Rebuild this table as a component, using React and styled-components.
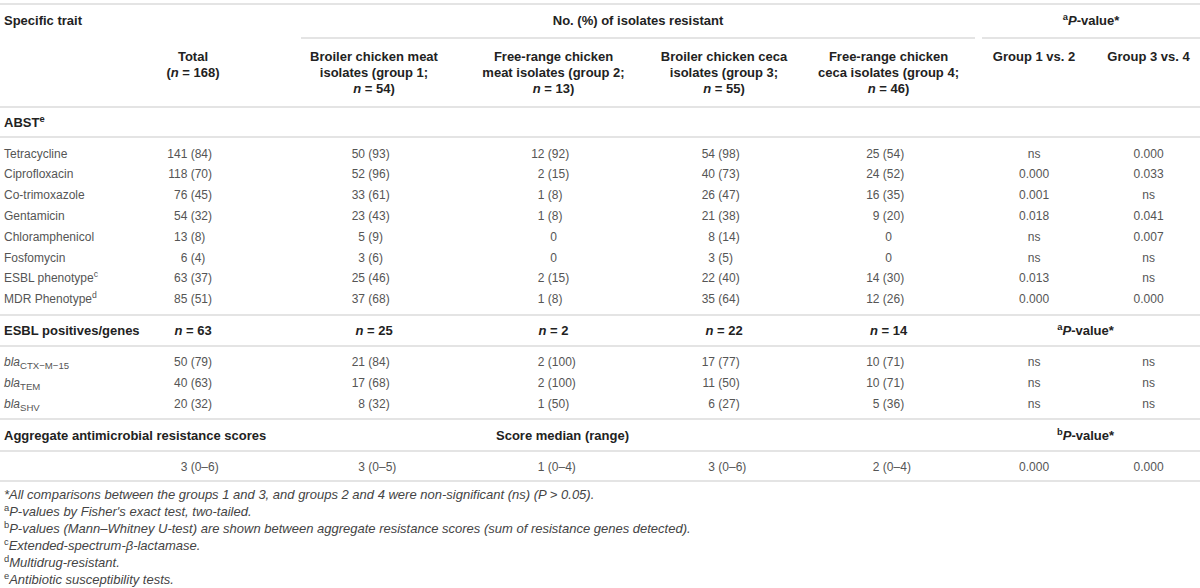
import React from 'react';
import styled, { createGlobalStyle } from 'styled-components';

const GlobalStyle = createGlobalStyle`
  html, body {
    margin: 0;
    padding: 0;
    background: #ffffff;
  }
  body {
    font-family: "Liberation Sans", Arial, sans-serif;
    color: #555555;
  }
`;

const LINE = '2px solid #e4e4e4';

const Page = styled.div`
  width: 1200px;
  padding-top: 3px;
`;

const Table = styled.table`
  width: 1200px;
  table-layout: fixed;
  border-collapse: separate;
  border-spacing: 0;
  border-top: ${LINE};
  font-size: 12px;
`;

const Row = styled.tr`
  & > td,
  & > th {
    padding: ${(p) => p.$pt || 0}px 4px ${(p) => p.$pb || 0}px;
    line-height: ${(p) => p.$lh || 16}px;
    border-bottom: ${(p) => (p.$line ? LINE : 'none')};
  }
`;

const Head = styled.th`
  font-size: 13px;
  font-weight: 700;
  color: #222222;
  text-align: ${(p) => p.$align || 'center'};
  vertical-align: top;
  white-space: nowrap;
`;

const Spanner = styled.div`
  margin: 0 ${(p) => p.$mr || 0}px 0 ${(p) => p.$ml || 0}px;
  padding-bottom: 8px;
  border-bottom: 2px solid ${(p) => (p.$line ? '#e4e4e4' : 'transparent')};
`;

const Label = styled.td`
  text-align: left;
  white-space: nowrap;
  font-size: ${(p) => (p.$bold ? '13px' : '12px')};
  font-weight: ${(p) => (p.$bold ? 700 : 400)};
  color: ${(p) => (p.$bold ? '#222222' : '#555555')};
`;

const Cell = styled.td`
  text-align: center;
  white-space: nowrap;
  font-size: ${(p) => (p.$bold ? '13px' : '12px')};
  font-weight: ${(p) => (p.$bold ? 700 : 400)};
  color: ${(p) => (p.$bold ? '#222222' : '#555555')};
`;

const Num = styled.span`
  display: inline-block;
  width: ${(p) => p.$digits * 0.556}em;
  margin-right: 0.278em;
  text-align: right;
`;

const Pct = styled.span`
  display: inline-block;
  width: 2.334em;
  text-align: left;
`;

const Indent = styled.span`
  display: inline-block;
  padding-left: ${(p) => p.$by}px;
`;

const Sup = styled.sup`
  font-size: 0.72em;
  line-height: 0;
  vertical-align: super;
  font-weight: ${(p) => (p.$bold ? 700 : 400)};
  font-style: normal;
`;

const Sub = styled.sub`
  font-size: 0.8em;
  line-height: 0;
  vertical-align: sub;
  font-style: normal;
`;

const Notes = styled.div`
  padding: 4px 4px 0;
  font-size: 13px;
  line-height: 17px;
  font-style: italic;
  color: #444444;
`;

const Note = styled.div`
  white-space: nowrap;
`;

const DIGITS = [3, 2, 2, 2, 2];

const abst = [
  ['Tetracycline', null, '141 (84)', '50 (93)', '12 (92)', '54 (98)', '25 (54)', 'ns', '0.000'],
  ['Ciprofloxacin', null, '118 (70)', '52 (96)', '2 (15)', '40 (73)', '24 (52)', '0.000', '0.033'],
  ['Co-trimoxazole', null, '76 (45)', '33 (61)', '1 (8)', '26 (47)', '16 (35)', '0.001', 'ns'],
  ['Gentamicin', null, '54 (32)', '23 (43)', '1 (8)', '21 (38)', '9 (20)', '0.018', '0.041'],
  ['Chloramphenicol', null, '13 (8)', '5 (9)', '0', '8 (14)', '0', 'ns', '0.007'],
  ['Fosfomycin', null, '6 (4)', '3 (6)', '0', '3 (5)', '0', 'ns', 'ns'],
  ['ESBL phenotype', 'c', '63 (37)', '25 (46)', '2 (15)', '22 (40)', '14 (30)', '0.013', 'ns'],
  ['MDR Phenotype', 'd', '85 (51)', '37 (68)', '1 (8)', '35 (64)', '12 (26)', '0.000', '0.000'],
];

const genes = [
  ['CTX\u2212M\u221215', '50 (79)', '21 (84)', '2 (100)', '17 (77)', '10 (71)', 'ns', 'ns'],
  ['TEM', '40 (63)', '17 (68)', '2 (100)', '11 (50)', '10 (71)', 'ns', 'ns'],
  ['SHV', '20 (32)', '8 (32)', '1 (50)', '6 (27)', '5 (36)', 'ns', 'ns'],
];

const scores = ['3 (0\u20136)', '3 (0\u20135)', '1 (0\u20134)', '3 (0\u20136)', '2 (0\u20134)', '0.000', '0.000'];

const Value = ({ v, digits }) => {
  const m = digits ? v.match(/^(\d+) (\(.+\))$/) : null;
  if (!m) return v;
  return (
    <>
      <Num $digits={digits}>{m[1]}</Num>
      <Pct>{m[2]}</Pct>
    </>
  );
};

const Values = ({ values }) =>
  values.map((v, i) => (
    <Cell key={i}>
      <Value v={v} digits={DIGITS[i]} />
    </Cell>
  ));

const PValue = ({ mark }) => (
  <>
    <Sup $bold>{mark}</Sup>
    <i>P</i>-value*
  </>
);

const N = ({ value }) => (
  <>
    <i>n</i> = {value}
  </>
);

const App = () => (
  <Page>
    <GlobalStyle />
    <Table>
      <colgroup>
        <col style={{ width: 103 }} />
        <col style={{ width: 180 }} />
        <col style={{ width: 182 }} />
        <col style={{ width: 177 }} />
        <col style={{ width: 164 }} />
        <col style={{ width: 165 }} />
        <col style={{ width: 126 }} />
        <col style={{ width: 103 }} />
      </colgroup>
      <thead>
        <Row $pt={8}>
          <Head $align="left">
            <Spanner>Specific trait</Spanner>
          </Head>
          <Head>
            <Spanner />
          </Head>
          <Head colSpan={4}>
            <Spanner $line $ml={14} $mr={-8}>
              No. (%) of isolates resistant
            </Spanner>
          </Head>
          <Head colSpan={2}>
            <Spanner $line $ml={7} $mr={-4}>
              <PValue mark="a" />
            </Spanner>
          </Head>
        </Row>
        <Row $pt={10} $pb={9} $line>
          <Head />
          <Head>
            Total
            <br />(<N value="168" />)
          </Head>
          <Head>
            Broiler chicken meat
            <br />
            isolates (group 1;
            <br />
            <N value="54" />)
          </Head>
          <Head>
            Free-range chicken
            <br />
            meat isolates (group 2;
            <br />
            <N value="13" />)
          </Head>
          <Head>
            Broiler chicken ceca
            <br />
            isolates (group 3;
            <br />
            <N value="55" />)
          </Head>
          <Head>
            Free-range chicken
            <br />
            ceca isolates (group 4;
            <br />
            <N value="46" />)
          </Head>
          <Head>Group 1 vs. 2</Head>
          <Head>Group 3 vs. 4</Head>
        </Row>
      </thead>
      <tbody>
        <Row $pt={7} $pb={5} $line>
          <Label $bold colSpan={8}>
            ABST<Sup $bold>e</Sup>
          </Label>
        </Row>
        {abst.map(([name, mark, ...values], i) => (
          <Row
            key={name}
            $lh={20.8}
            $pt={i === 0 ? 5.6 : 0}
            $pb={i === abst.length - 1 ? 4 : 0}
            $line={i === abst.length - 1}
          >
            <Label>
              {name}
              {mark && <Sup>{mark}</Sup>}
            </Label>
            <Values values={values} />
          </Row>
        ))}
        <Row $pt={7} $pb={6} $line>
          <Label $bold>ESBL positives/genes</Label>
          <Cell $bold>
            <N value="63" />
          </Cell>
          <Cell $bold>
            <N value="25" />
          </Cell>
          <Cell $bold>
            <N value="2" />
          </Cell>
          <Cell $bold>
            <N value="22" />
          </Cell>
          <Cell $bold>
            <N value="14" />
          </Cell>
          <Cell $bold colSpan={2}>
            <PValue mark="a" />
          </Cell>
        </Row>
        {genes.map(([gene, ...values], i) => (
          <Row
            key={gene}
            $lh={20.7}
            $pt={i === 0 ? 5.3 : 0}
            $pb={i === genes.length - 1 ? 3.7 : 0}
            $line={i === genes.length - 1}
          >
            <Label>
              <i>bla</i>
              <Sub>{gene}</Sub>
            </Label>
            <Values values={values} />
          </Row>
        ))}
        <Row $pt={7.7} $pb={6} $line>
          <Label $bold colSpan={2}>
            Aggregate antimicrobial resistance scores
          </Label>
          <Cell />
          <Cell $bold>
            <Indent $by={18}>Score median (range)</Indent>
          </Cell>
          <Cell />
          <Cell />
          <Cell $bold colSpan={2}>
            <PValue mark="b" />
          </Cell>
        </Row>
        <Row $pt={7} $pb={5.3} $line>
          <Label />
          <Values values={scores} />
        </Row>
      </tbody>
    </Table>
    <Notes>
      <Note>
        *All comparisons between the groups 1 and 3, and groups 2 and 4 were non-significant (ns) (P &gt; 0.05).
      </Note>
      <Note>
        <Sup>a</Sup>P-values by Fisher's exact test, two-tailed.
      </Note>
      <Note>
        <Sup>b</Sup>P-values (Mann–Whitney U-test) are shown between aggregate resistance scores (sum of resistance
        genes detected).
      </Note>
      <Note>
        <Sup>c</Sup>Extended-spectrum-β-lactamase.
      </Note>
      <Note>
        <Sup>d</Sup>Multidrug-resistant.
      </Note>
      <Note>
        <Sup>e</Sup>Antibiotic susceptibility tests.
      </Note>
    </Notes>
  </Page>
);

export default App;
